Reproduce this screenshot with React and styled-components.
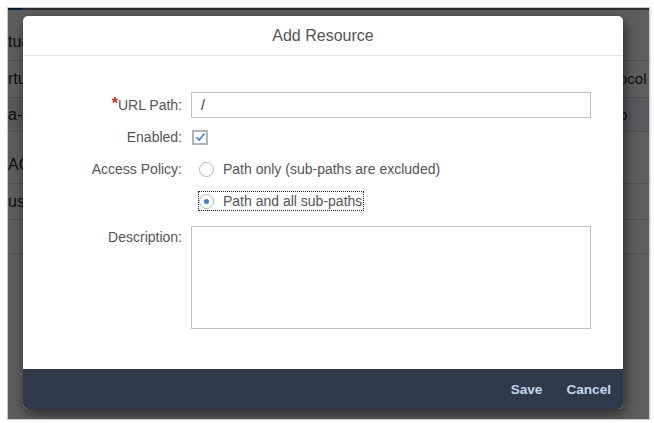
import React from "react";
import styled, { createGlobalStyle } from "styled-components";

const GlobalStyle = createGlobalStyle`
  html, body {
    margin: 0;
    padding: 0;
    background: #fff;
  }
  body {
    font-family: "Liberation Sans", Arial, sans-serif;
  }
`;

const Frame = styled.div`
  position: relative;
  width: 641px;
  height: 411px;
  margin: 7px 0 0 7px;
  border: 1px solid #c9c9c9;
  box-shadow: 1px 1px 2px rgba(0, 0, 0, 0.12);
  overflow: hidden;
`;

/* the page behind the dialog */
const BgPage = styled.div`
  display: flex;
  flex-direction: column;
  height: 100%;
  background: #fff;
  color: #2a2a2a;
  font-size: 16px;
`;

const TopStrip = styled.div`
  height: 2px;
  background: #7a7a7a;
  display: flex;
`;

const TopTab = styled.div`
  width: 14px;
  background: #0b5286;
`;

const BgRow = styled.div`
  display: flex;
  justify-content: space-between;
  align-items: ${(p) => (p.$title ? "flex-end" : "center")};
  height: ${(p) => p.$h}px;
  padding-bottom: ${(p) => (p.$title ? "9px" : "0")};
  box-sizing: border-box;
  border-bottom: 1px solid #dcdcdc;
  background: ${(p) => (p.$active ? "#eef5fd" : "transparent")};
  line-height: 18px;
  white-space: nowrap;
`;

const BgCell = styled.span`
  padding-left: 0;
`;

const BgRight = styled.span`
  width: 30px;
  font-size: 15px;
`;

const Overlay = styled.div`
  position: absolute;
  inset: 0;
  background: rgba(0, 0, 0, 0.63);
  display: flex;
  align-items: flex-start;
  padding: 8px 0 0 15px;
`;

const Dialog = styled.div`
  width: 600px;
  height: 393px;
  background: #fff;
  border-radius: 5px;
  box-shadow: 2px 5px 14px rgba(0, 0, 0, 0.55);
  display: flex;
  flex-direction: column;
  overflow: hidden;
`;

const Header = styled.div`
  height: 39px;
  border-bottom: 1px solid #e4e4e4;
  display: flex;
  align-items: center;
  justify-content: center;
  font-size: 16px;
  color: #555;
`;

const Body = styled.div`
  flex: 1;
  padding-top: 35px;
`;

const Form = styled.div`
  display: grid;
  grid-template-columns: 159px 400px;
  column-gap: 9px;
  row-gap: 6px;
  font-size: 14px;
  color: #555;
`;

const Label = styled.div`
  text-align: right;
  line-height: ${(p) => (p.$top ? "16px" : "26px")};
  padding-top: ${(p) => (p.$top ? "3px" : "0")};
  margin-top: ${(p) => (p.$gap ? "6px" : "0")};
  white-space: nowrap;
`;

const Required = styled.span`
  color: #c9302c;
  font-weight: bold;
  font-size: 16px;
  vertical-align: 1px;
`;

const Field = styled.div`
  display: flex;
  align-items: center;
  min-height: 26px;
  margin-top: ${(p) => (p.$gap ? "6px" : "0")};
`;

const TextInput = styled.div`
  box-sizing: border-box;
  width: 400px;
  height: 26px;
  border: 1px solid #c2c2c2;
  padding-left: 9px;
  line-height: 24px;
  color: #333;
`;

const TextArea = styled.div`
  box-sizing: border-box;
  width: 400px;
  height: 103px;
  border: 1px solid #c2c2c2;
`;

const CheckBox = styled.span`
  box-sizing: border-box;
  width: 16px;
  height: 15px;
  margin-left: 1px;
  border: 2px solid #b4b4b4;
  background: #fff;
  display: flex;
  align-items: center;
  justify-content: center;
`;

const Option = styled.div`
  display: flex;
  align-items: center;
  gap: 9px;
  height: 18px;
  margin-left: 8px;
  padding-right: 1px;
  outline: ${(p) => (p.$focus ? "1px dotted #222" : "none")};
  color: #555;
`;

const Radio = styled.span`
  box-sizing: border-box;
  width: 15px;
  height: 15px;
  border-radius: 50%;
  border: 1.5px solid #b4b4b4;
  background: #fff;
  display: flex;
  align-items: center;
  justify-content: center;

  &::after {
    content: "";
    width: 5px;
    height: 5px;
    border-radius: 50%;
    background: ${(p) => (p.$checked ? "#3a7dc8" : "transparent")};
  }
`;

const Footer = styled.div`
  height: 40px;
  background: #2e3a49;
  display: flex;
  align-items: center;
  justify-content: flex-end;
  gap: 24px;
  padding-right: 12px;
`;

const FooterButton = styled.span`
  color: #c3d9f0;
  font-weight: bold;
  font-size: 13.6px;
  cursor: pointer;
`;

const App = () => {
  return (
    <>
      <GlobalStyle />
      <Frame>
        <BgPage>
          <TopStrip>
            <TopTab />
          </TopStrip>
          <BgRow $h={51} $title>
            <BgCell>tua</BgCell>
          </BgRow>
          <BgRow $h={37}>
            <BgCell>rtu</BgCell>
            <BgRight>ocol</BgRight>
          </BgRow>
          <BgRow $h={34} $active>
            <BgCell>a-s</BgCell>
            <BgRight>p</BgRight>
          </BgRow>
          <BgRow $h={52} $title>
            <BgCell>ACc</BgCell>
          </BgRow>
          <BgRow $h={36}>
            <BgCell>us</BgCell>
          </BgRow>
          <BgRow $h={34} />
        </BgPage>

        <Overlay>
          <Dialog>
            <Header>Add Resource</Header>
            <Body>
              <Form>
                <Label>
                  <Required>*</Required>URL Path:
                </Label>
                <Field>
                  <TextInput>/</TextInput>
                </Field>

                <Label>Enabled:</Label>
                <Field>
                  <CheckBox>
                    <svg width="11" height="10" viewBox="0 0 11 10">
                      <path
                        d="M1.5 5.2 L4.2 8 L9.5 1.5"
                        fill="none"
                        stroke="#3a7dc8"
                        strokeWidth="1.6"
                      />
                    </svg>
                  </CheckBox>
                </Field>

                <Label>Access Policy:</Label>
                <Field>
                  <Option>
                    <Radio />
                    Path only (sub-paths are excluded)
                  </Option>
                </Field>

                <Label />
                <Field>
                  <Option $focus>
                    <Radio $checked />
                    Path and all sub-paths
                  </Option>
                </Field>

                <Label $top $gap>
                  Description:
                </Label>
                <Field $gap>
                  <TextArea />
                </Field>
              </Form>
            </Body>
            <Footer>
              <FooterButton>Save</FooterButton>
              <FooterButton>Cancel</FooterButton>
            </Footer>
          </Dialog>
        </Overlay>
      </Frame>
    </>
  );
};

export default App;
